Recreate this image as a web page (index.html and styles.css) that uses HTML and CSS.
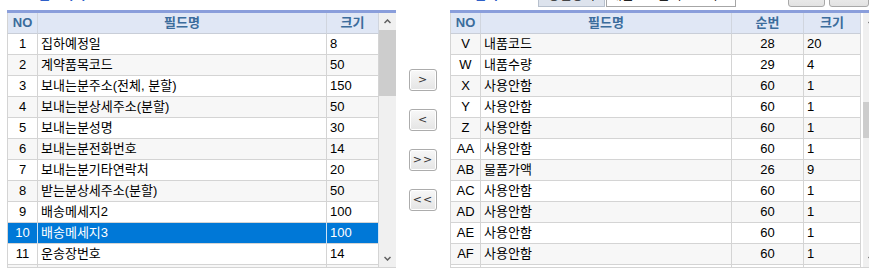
FILE: index.html
```html
<!DOCTYPE html>
<html lang="ko">
<head>
<meta charset="utf-8">
<link rel="stylesheet" href="styles.css">
</head>
<body>
<div class="page">
  <div class="topbar">
    <div class="tl"><span class="tfrag">필드목록</span></div>
    <div class="tr">
      <span class="tfrag tfrag2">선택</span>
      <div class="cmb-label">정렬항목</div>
      <div class="cmb-input">내품코드순서로보기</div>
      <div class="arrbtn">▲</div>
      <div class="arrbtn arrbtn2">▼</div>
    </div>
  </div>

  <div class="main">
    <div class="panel panel-left">
      <div class="grid grid-left">
        <div class="row head"><div class="c no">NO</div><div class="c ctr">필드명</div><div class="c ctr">크기</div></div>
        <div class="row"><div class="c no">1</div><div class="c">집하예정일</div><div class="c">8</div></div>
        <div class="row alt"><div class="c no">2</div><div class="c">계약품목코드</div><div class="c">50</div></div>
        <div class="row"><div class="c no">3</div><div class="c">보내는분주소(전체, 분할)</div><div class="c">150</div></div>
        <div class="row alt"><div class="c no">4</div><div class="c">보내는분상세주소(분할)</div><div class="c">50</div></div>
        <div class="row"><div class="c no">5</div><div class="c">보내는분성명</div><div class="c">30</div></div>
        <div class="row alt"><div class="c no">6</div><div class="c">보내는분전화번호</div><div class="c">14</div></div>
        <div class="row"><div class="c no">7</div><div class="c">보내는분기타연락처</div><div class="c">20</div></div>
        <div class="row alt"><div class="c no">8</div><div class="c">받는분상세주소(분할)</div><div class="c">50</div></div>
        <div class="row"><div class="c no">9</div><div class="c">배송메세지2</div><div class="c">100</div></div>
        <div class="row sel"><div class="c no">10</div><div class="c">배송메세지3</div><div class="c">100</div></div>
        <div class="row"><div class="c no">11</div><div class="c">운송장번호</div><div class="c">14</div></div>
        <div class="row alt"><div class="c no"></div><div class="c"></div><div class="c"></div></div>
      </div>
      <div class="vscroll">
        <div class="sb-btn"><svg width="7" height="5" viewBox="0 0 7 5"><polyline points="0.5,4 3.5,1 6.5,4" fill="none" stroke="#606060" stroke-width="1.5"/></svg></div>
        <div class="thumb thumb-left"></div>
        <div class="sb-space"></div>
        <div class="sb-btn"><svg width="7" height="5" viewBox="0 0 7 5"><polyline points="0.5,1 3.5,4 6.5,1" fill="none" stroke="#606060" stroke-width="1.5"/></svg></div>
      </div>
    </div>

    <div class="mid">
      <div class="mbtn">&gt;</div>
      <div class="mbtn">&lt;</div>
      <div class="mbtn">&gt;&gt;</div>
      <div class="mbtn">&lt;&lt;</div>
    </div>

    <div class="panel panel-right">
      <div class="grid grid-right">
        <div class="row head"><div class="c no">NO</div><div class="c ctr">필드명</div><div class="c ctr">순번</div><div class="c ctr">크기</div></div>
        <div class="row alt"><div class="c no">V</div><div class="c">내품코드</div><div class="c ctr">28</div><div class="c">20</div></div>
        <div class="row"><div class="c no">W</div><div class="c">내품수량</div><div class="c ctr">29</div><div class="c">4</div></div>
        <div class="row alt"><div class="c no">X</div><div class="c">사용안함</div><div class="c ctr">60</div><div class="c">1</div></div>
        <div class="row"><div class="c no">Y</div><div class="c">사용안함</div><div class="c ctr">60</div><div class="c">1</div></div>
        <div class="row alt"><div class="c no">Z</div><div class="c">사용안함</div><div class="c ctr">60</div><div class="c">1</div></div>
        <div class="row"><div class="c no">AA</div><div class="c">사용안함</div><div class="c ctr">60</div><div class="c">1</div></div>
        <div class="row alt"><div class="c no">AB</div><div class="c">물품가액</div><div class="c ctr">26</div><div class="c">9</div></div>
        <div class="row"><div class="c no">AC</div><div class="c">사용안함</div><div class="c ctr">60</div><div class="c">1</div></div>
        <div class="row alt"><div class="c no">AD</div><div class="c">사용안함</div><div class="c ctr">60</div><div class="c">1</div></div>
        <div class="row"><div class="c no">AE</div><div class="c">사용안함</div><div class="c ctr">60</div><div class="c">1</div></div>
        <div class="row alt"><div class="c no">AF</div><div class="c">사용안함</div><div class="c ctr">60</div><div class="c">1</div></div>
        <div class="row"><div class="c no"></div><div class="c"></div><div class="c ctr"></div><div class="c"></div></div>
      </div>
      <div class="vscroll">
        <div class="sb-btn"><svg width="7" height="5" viewBox="0 0 7 5"><polyline points="0.5,4 3.5,1 6.5,4" fill="none" stroke="#606060" stroke-width="1.5"/></svg></div>
        <div class="thumb thumb-right"></div>
        <div class="sb-space"></div>
        <div class="sb-btn"><svg width="7" height="5" viewBox="0 0 7 5"><polyline points="0.5,1 3.5,4 6.5,1" fill="none" stroke="#606060" stroke-width="1.5"/></svg></div>
      </div>
    </div>
  </div>
</div>
</body>
</html>
```

FILE: styles.css
```css
* { box-sizing: border-box; }
html, body {
  margin: 0;
  padding: 0;
  background: #ffffff;
  overflow: hidden;
}
body {
  font-family: "Liberation Sans", "Noto Sans CJK KR", sans-serif;
  font-size: 13px;
  color: #000;
}
.page {
  width: 869px;
  height: 270px;
  overflow: hidden;
}

/* top strip (cut off by the top edge) */
.topbar {
  display: flex;
  height: 10px;
  overflow: hidden;
  align-items: flex-end;
}
.tl {
  width: 450px;
  display: flex;
  align-items: flex-end;
  padding-left: 38px;
}
.tfrag {
  display: block;
  color: #2f5fc8;
  font-weight: bold;
  font-size: 13px;
  line-height: 16px;
  height: 16px;
  margin-bottom: 7px;
  flex: none;
}
.tr {
  display: flex;
  align-items: flex-end;
  padding-left: 36px;
  flex: none;
}
.tfrag2 {
  width: 64px;
}
.cmb-label {
  width: 67px;
  height: 22px;
  margin-bottom: 3px;
  background: #dde3ed;
  border: 1px solid #b7c0cd;
  text-align: center;
  line-height: 17px;
  color: #222;
  flex: none;
}
.cmb-input {
  width: 130px;
  height: 22px;
  margin-left: 1px;
  margin-bottom: 3px;
  background: #fff;
  border: 1px solid #a6a6a6;
  line-height: 17px;
  padding-left: 3px;
  color: #222;
  white-space: nowrap;
  overflow: hidden;
  flex: none;
}
.arrbtn {
  width: 37px;
  height: 22px;
  margin-left: 52px;
  margin-bottom: 3px;
  border: 1px solid #a8a8a8;
  border-radius: 3px;
  background: linear-gradient(#f7f7f7, #e2e2e2);
  text-align: center;
  line-height: 16px;
  font-size: 10px;
  color: #333;
  flex: none;
}
.arrbtn2 {
  margin-left: 4px;
  width: 40px;
}

/* main area */
.main {
  display: flex;
  align-items: flex-start;
  padding-left: 7px;
}
.panel {
  display: flex;
  border-top: 3px solid #8a9edb;
  border-bottom: 1px solid #d4d4d4;
  height: 258px;
  overflow: hidden;
  flex: none;
}
.panel-left { width: 389px; }
.panel-right { width: 430px; }

.grid { display: flex; flex-direction: column; }
.grid-left { width: 372px; }
.grid-right { width: 411px; }

.row {
  display: grid;
  height: 21px;
  flex: none;
}
.grid-left .row { grid-template-columns: 31px 289px 52px; }
.grid-right .row { grid-template-columns: 31px 251px 72px 57px; }

.c {
  height: 21px;
  border-right: 1px solid #d4d4d4;
  border-bottom: 1px solid #d4d4d4;
  line-height: 20px;
  padding-left: 3px;
  white-space: nowrap;
  overflow: hidden;
}
.c.no {
  border-left: 1px solid #d4d4d4;
  text-align: center;
  padding-left: 0;
}
.c.ctr {
  text-align: center;
  padding-left: 0;
}
.row.alt .c { background: #f7f7f7; }
.row.sel .c {
  background: #0078d7;
  color: #ffffff;
  border-right-color: #cfe3f5;
}
.row.head .c {
  background: #e0e7f5;
  color: #3b6c9c;
  font-weight: bold;
  border-right-color: #d0d5de;
  border-bottom-color: #c9ced8;
}

/* scrollbar */
.vscroll {
  width: 17px;
  flex: none;
  background: #f0f0f0;
  display: flex;
  flex-direction: column;
  height: 254px;
}
.panel-right .vscroll { margin-left: 2px; }
.sb-btn {
  height: 17px;
  display: flex;
  align-items: center;
  justify-content: center;
  flex: none;
}
.thumb {
  background: #cdcdcd;
  flex: none;
}
.thumb-left { height: 66px; }
.thumb-right { height: 36px; margin-top: 72px; }
.sb-space { flex: 1; }

/* middle buttons */
.mid {
  width: 54px;
  flex: none;
  display: flex;
  flex-direction: column;
  gap: 18px;
  padding-top: 59px;
  padding-left: 13px;
}
.mbtn {
  width: 28px;
  height: 22px;
  border: 1px solid #acacac;
  border-radius: 3px;
  background: linear-gradient(#f8f8f8, #e4e4e4);
  box-shadow: inset 0 0 0 1px #ffffff;
  text-align: center;
  line-height: 19px;
  font-family: "DejaVu Sans", sans-serif;
  font-size: 11px;
  color: #333;
  letter-spacing: 1px;
}
```
